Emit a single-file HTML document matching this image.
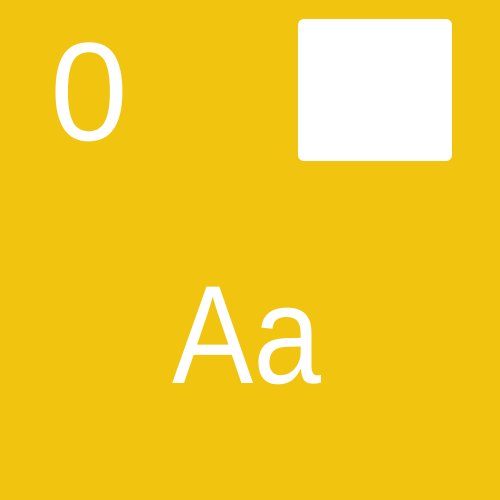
<!DOCTYPE html>
<html><head><style>
html,body{margin:0;padding:0}
body{width:500px;height:500px;background:#F1C40F;position:relative;overflow:hidden;font-family:"Liberation Sans",sans-serif;color:#fff}
.t{position:absolute;font-size:140px;line-height:1;white-space:nowrap}
.r{position:absolute;left:298px;top:19px;width:154px;height:142px;background:#fff;border-radius:6px}
</style></head><body>
<div class="t" style="left:50px;top:22px">0</div>
<div class="r"></div>
<div class="t" style="left:172px;top:265px;transform:scaleX(0.87);transform-origin:0 0">Aa</div>
</body></html>
